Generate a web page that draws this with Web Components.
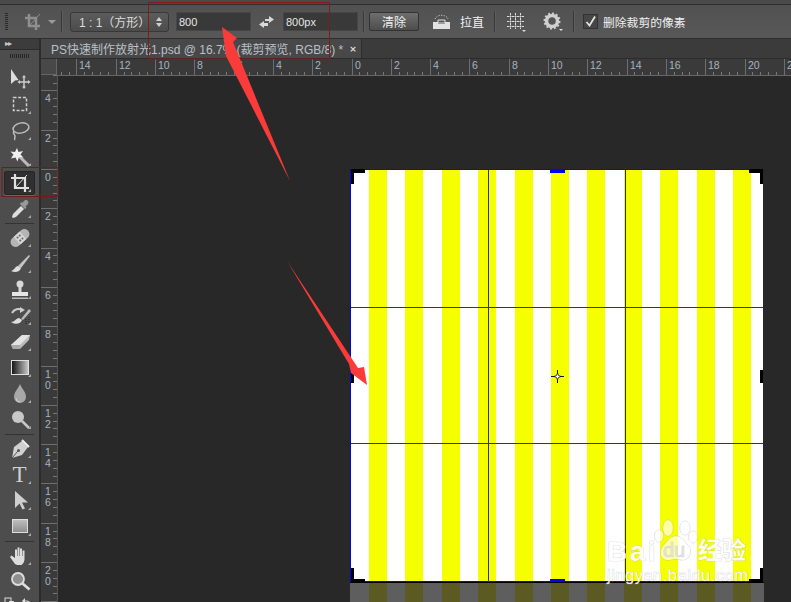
<!DOCTYPE html>
<html lang="zh"><head><meta charset="utf-8"><title>Photoshop</title>
<style>html,body{margin:0;padding:0;background:#282828;overflow:hidden}</style></head>
<body>
<ps-app></ps-app>
<script>
const FONT='"Liberation Sans","Noto Sans CJK SC",sans-serif';
function comp(name,html,setup){customElements.define(name,class extends HTMLElement{connectedCallback(){if(this.shadowRoot)return;const r=this.attachShadow({mode:'open'});r.innerHTML=html(this);if(setup)setup(r,this);}});}
const ICONS={
move:'<path d="M3 2v15l4-3.500 3.500-.5z" fill="#ddd"/><path d="M16 10v10M11 15h10" stroke="#ccc" stroke-width="1.500"/><path d="M16 8l2 2.500h-4zM16 22l2-2.500h-4zM9.500 15l2.500-2v4zM22.500 15l-2.500-2v4z" fill="#ccc"/>',
marquee:'<rect x="5.500" y="4.500" width="13" height="13" fill="none" stroke="#d0d0d0" stroke-width="1.500" stroke-dasharray="3 1.700"/>',
lasso:'<ellipse cx="13" cy="9" rx="8" ry="5" transform="rotate(-12 13 9)" fill="none" stroke="#bdbdbd" stroke-width="1.500"/><path d="M6 12c-2 3 1 3 1 5 0 2-1 3 0 4" fill="none" stroke="#bdbdbd" stroke-width="1.500"/>',
wand:'<path d="M11 11l10 10" stroke="#bbb" stroke-width="3"/><path d="M9 3l1.500 4 4.500-1-2.500 3.500 3 3-4.500-.5-1.500 4.500-2-4-4.500 1 2.500-4-3-3 4.500.5z" fill="#f0f0f0"/>',
crop:'<path d="M7 3v14h14M3 7h14v14" fill="none" stroke="#e0e0e0" stroke-width="2.200"/><path d="M7 17L19 4" stroke="#e0e0e0" stroke-width="1"/>',
eyedropper:'<path d="M5 21l-1-1 1-3 8-8 3 3-8 8z" fill="#ddd"/><path d="M12 7l5 5 1.500-1.500-1-1 2.500-2.500c1.500-3-1.500-5-3.500-3.500l-2.500 2.500-1-1z" fill="#999"/>',
heal:'<g transform="rotate(-42 12 12)"><rect x="1" y="7" width="22" height="10" rx="5" fill="#b5b5b5"/><rect x="8" y="7" width="8" height="10" fill="#d5d5d5"/><g fill="#666"><circle cx="10.500" cy="10" r="1"/><circle cx="13.500" cy="10" r="1"/><circle cx="10.500" cy="14" r="1"/><circle cx="13.500" cy="14" r="1"/></g></g>',
brush:'<path d="M10 14L21 3l1 1-9 12z" fill="#c5c5c5"/><path d="M10 14c-3 0-3 4-7 5 4 2 9 1 10-3z" fill="#ddd"/>',
stamp:'<circle cx="12" cy="6" r="3.500" fill="#d8d8d8"/><rect x="10.500" y="8" width="3" height="6" fill="#d8d8d8"/><path d="M4 14h16v4H4z" fill="#e5e5e5"/><rect x="4" y="19.500" width="16" height="1.500" fill="#bbb"/>',
history:'<path d="M4 9c2-4 7-5 10-3" fill="none" stroke="#ccc" stroke-width="2"/><path d="M12 3l5 3-5 3z" fill="#ccc"/><path d="M21 5l-8 10 2 1 8-9z" fill="#bbb"/><path d="M11 14c-3 0-4 4-8 4 4 3 10 2 11-2z" fill="#ddd"/><path d="M18 15v6M21 13v6" stroke="#222" stroke-width="1" stroke-dasharray="1 1"/>',
eraser:'<path d="M3 15L14 5h8l-1 5-9 9H5z" fill="#bbb"/><path d="M3 15l9 0 10-10-8 0z" fill="#e2e2e2"/><path d="M3 15h9v4H5z" fill="#aaa"/>',
gradient:'<defs><linearGradient id="g1"><stop offset="0" stop-color="#111"/><stop offset="1" stop-color="#ccc"/></linearGradient></defs><rect x="3.500" y="4.500" width="17" height="14" fill="url(#g1)" stroke="#e0e0e0"/>',
drop:'<path d="M12 2c2 5 6 8 6 13a6 6 0 0 1-12 0c0-5 4-8 6-13z" fill="#a8a8a8"/><path d="M8 16a4 4 0 0 0 4 4" stroke="#ccc" fill="none"/>',
dodge:'<circle cx="10" cy="9" r="6" fill="#c8c8c8"/><path d="M14 13l7 7" stroke="#c8c8c8" stroke-width="2.500"/>',
pen:'<path d="M4 21l2-11 8-6 6 6-6 8z" fill="#d0d0d0"/><path d="M4 21l6-7" stroke="#555"/><circle cx="10.500" cy="13.500" r="1.500" fill="#555"/><path d="M14 3l7 7" stroke="#eee" stroke-width="2"/>',
pathsel:'<path d="M7 2v17l4.500-4.500 3 6 2.500-1-3-6H20z" fill="#cfcfcf"/>',
rect:'<defs><linearGradient id="g2" x2="0" y2="1"><stop offset="0" stop-color="#c0c0c0"/><stop offset="1" stop-color="#8c8c8c"/></linearGradient></defs><rect x="4.500" y="4.500" width="15" height="13" fill="url(#g2)" stroke="#ddd"/>',
hand:'<path d="M7 20L2 13l1.500-1.500L7 14V5.500h2V12h.5V3.500h2V12h.5V4.500h2V12h.5V6.500h2V15c0 3-1.500 5-3 6H9z" fill="#dcdcdc"/>',
zoom:'<circle cx="10" cy="9" r="6" fill="#8f8f8f" stroke="#ddd" stroke-width="1.800"/><path d="M14.500 13.500l7 6" stroke="#ddd" stroke-width="2.800"/>'
};
comp('ps-icon',h=>`<style>:host{display:inline-flex;flex:none;width:${h.getAttribute('size')||24}px;height:${h.getAttribute('size')||24}px}svg{width:100%;height:100%;display:block}</style><svg viewBox="0 0 24 24">${ICONS[h.getAttribute('name')]||''}</svg>`);

comp('ps-tool',h=>`<style>
:host{display:flex;align-items:center;justify-content:center;position:relative;height:26px;width:39px;box-sizing:border-box;flex:none}
:host([active]) .b{background:#2f2f2f;border:1px solid #262626;box-shadow:0 1px 0 #666}
.b{width:31px;height:24px;box-sizing:border-box;display:flex;align-items:center;justify-content:center;position:relative;border:1px solid transparent;border-radius:2px;font:23px "Liberation Serif",serif;color:#d0d0d0}
.c{position:absolute;right:3px;bottom:2px;width:0;height:0;border-left:3px solid transparent;border-bottom:3px solid #aaa}
</style><div class="b"><slot></slot>${h.hasAttribute('corner')?'<i class="c"></i>':''}</div>`);

comp('ps-toolbox',()=>`<style>
:host{display:flex;flex-direction:column;width:39px;height:100%;background:#4d4d4d;border-right:2px solid #2c2c2c;overflow:hidden;font-size:0}
.head{height:10px;background:#3c3c3c;border-bottom:1px solid #2c2c2c;color:#ccc;font:8px "DejaVu Sans",sans-serif;letter-spacing:-1px;padding-left:5px;line-height:10px;flex:none}
.grip{height:4px;margin:4px 10px 8px;flex:none;background:repeating-linear-gradient(90deg,#262626 0 1px,transparent 1px 2px)}
</style><div class="head">▸▸</div><div class="grip"></div><slot></slot>`);

comp('ps-sep',()=>`<style>:host{display:block;height:1px;background:#333;margin:1px 5px;flex:none}</style>`);
comp('ps-swatches',()=>`<style>:host{display:block;height:10px;flex:none;margin-top:2px}svg{display:block}</style><svg width="39" height="10"><rect x="5" y="1" width="6" height="9" fill="none" stroke="#ddd"/><rect x="9" y="4" width="5" height="6" fill="#ddd"/><path d="M23 4h4a3 3 0 0 1 3 3v3" fill="none" stroke="#ddd"/><path d="M25 1v6l-3-3z" fill="#ddd"/></svg>`);
comp('ps-vdiv',()=>`<style>:host{display:block;flex:none;width:1px;height:21px;background:#383838;box-shadow:1px 0 0 #5e5e5e}</style>`);
comp('ps-field',()=>`<style>:host{display:flex;align-items:center;box-sizing:border-box;height:19px;background:#393939;border:1px solid #464646;color:#e6e6e6;font:11px ${FONT};padding-left:2px;flex:none}</style><slot></slot>`);
comp('ps-select',()=>`<style>:host{display:flex;align-items:center;box-sizing:border-box;width:99px;height:20px;border:1px solid #383838;border-radius:3px;background:linear-gradient(#5c5c5c,#4c4c4c);color:#dcdcdc;font:12px ${FONT};padding-left:8px;flex:none;position:relative;white-space:pre}
svg{position:absolute;right:5px;top:4px}</style><slot></slot><svg width="8" height="10"><path d="M4 0l3 4H1zM4 10l3-4H1z" fill="#d0d0d0"/></svg>`);
comp('ps-button',()=>`<style>:host{display:flex;align-items:center;justify-content:center;box-sizing:border-box;width:50px;height:19px;border:1px solid #333;border-radius:2px;background:linear-gradient(#6e6e6e,#4d4d4d);color:#f0f0f0;font:12px ${FONT};flex:none}</style><slot></slot>`);
comp('ps-check',()=>`<style>:host{display:flex;align-items:center;color:#f0f0f0;font:11.800px ${FONT};flex:none}
i{display:flex;align-items:center;justify-content:center;box-sizing:border-box;width:15px;height:15px;background:#464646;border:1px solid #333;margin-right:5px}</style>
<i><svg width="13" height="13"><path d="M2.500 7l3 3.500L11 1.500" fill="none" stroke="#e6e6e6" stroke-width="1.700"/></svg></i><slot></slot>`);

comp('ps-optionbar',()=>`<style>
:host{display:flex;align-items:center;box-sizing:border-box;height:39px;background:linear-gradient(#4a4a4a 0 4px,#2e2e2e 4px 5px,#515151 5px,#585858 38px,#2e2e2e 38px);padding:5px 0 1px 0;grid-column:1/3}
.grip{width:3px;height:18px;margin:0 16px 0 5px;background:repeating-linear-gradient(#2a2a2a 0 1px,transparent 1px 2px);flex:none}
.tri{width:0;height:0;border:4px solid transparent;border-top:4px solid #9a9a9a;border-bottom:0;margin:0 5px 0 7px}
.s{flex:none;color:#f2f2f2;font:12px ${FONT}}
svg{flex:none;display:block}
</style>
<div class="grip"></div>
<svg width="17" height="18" viewBox="0 0 17 18"><path d="M5 1v12h11M1 5h11v12" fill="none" stroke="#8f8f8f" stroke-width="2.500"/><path d="M5 13L16 1" stroke="#8f8f8f"/></svg>
<div class="tri"></div><ps-vdiv style="margin-right:8px"></ps-vdiv>
<ps-select>1 : 1（方形）</ps-select>
<ps-field style="width:75px;margin-left:7px">800</ps-field>
<svg width="15" height="14" viewBox="0 0 15 14" style="margin:0 9px 0 8px"><path d="M6 4h4V1l5 3.500L10 8V6H6zM9 8H5V6L0 9.500 5 13v-2h4z" fill="#d8d8d8"/></svg>
<ps-field style="width:75px">800px</ps-field>
<ps-vdiv style="margin:0 5px"></ps-vdiv>
<ps-button>清除</ps-button>
<svg width="19" height="16" viewBox="0 0 19 16" style="margin:0 9px 0 13px"><path d="M1 8h5v2h7V8h5v7H1z" fill="#e2e2e2"/><path d="M6 6h7v3H6z" fill="none" stroke="#e2e2e2"/><path d="M3 5c2-5 11-5 13 0" fill="none" stroke="#ddd" stroke-dasharray="1 1.500"/></svg>
<span class="s">拉直</span>
<ps-vdiv style="margin:0 11px 0 10px"></ps-vdiv>
<svg width="20" height="20" viewBox="0 0 20 20"><path d="M4.500 1v16M9.500 1v16M14.500 1v16M1 4.500h17M1 9.500h17M1 14.500h17" stroke="#ddd" stroke-dasharray="2 .5"/><path d="M16 18h4l-2 2z" fill="#ddd"/></svg>
<svg width="20" height="20" viewBox="0 0 20 20" style="margin:0 10px 0 17px"><circle cx="9" cy="9" r="5.500" fill="none" stroke="#cfcfcf" stroke-width="3.500"/><circle cx="9" cy="9" r="7.500" fill="none" stroke="#cfcfcf" stroke-width="2" stroke-dasharray="2 1.900"/><path d="M16 17h4l-2 2z" fill="#ddd"/></svg>
<ps-vdiv style="margin-right:9px"></ps-vdiv>
<ps-check>删除裁剪的像素</ps-check>`);

comp('ps-tabbar',()=>`<style>:host{display:flex;height:20px;background:#3b3b3b;box-sizing:border-box;border-bottom:1px solid #2c2c2c}
.tab{display:flex;align-items:center;width:321px;box-sizing:border-box;padding-left:10px;background:#484848;border-right:1px solid #2c2c2c;color:#b9c0c8;font:12px ${FONT};white-space:pre}
.x{margin-left:6px;font:bold 9px "DejaVu Sans",sans-serif;color:#ddd}</style>
<div class="tab"><slot></slot><span class="x">×</span></div>`);

function rulerSvg(dir,len,origin){
 let ticks='',labels='';const st=39.3;
 const from=Math.ceil(-origin/st)-1,to=Math.ceil((len-origin)/st)+1;
 for(let i=from;i<=to;i++){
  const p=origin+i*st;
  if(dir==='h'){
   ticks+=`<path d="M${Math.round(p)+.5} 0v16" stroke="#6e6e6e"/>`;
   for(let k=1;k<5;k++){const t=p+k*st/5;ticks+=`<path d="M${Math.round(t)+.5} 13v3" stroke="#777"/>`;}
   if(p>=0&&p+3<len){
     const lab=String(Math.abs(i*2));
     /* the window's edge leaves only the first digit of the last label in sight */
     const shown=(p+3+13>len)?lab[0]:lab;
     labels+=`<span style="left:${Math.round(p)+3}px;top:1px">${shown}</span>`;
   }
  }else{
   ticks+=`<path d="M0 ${Math.round(p)+.5}h16" stroke="#6e6e6e"/>`;
   for(let k=1;k<5;k++){const t=p+k*st/5;ticks+=`<path d="M12 ${Math.round(t)+.5}h4" stroke="#777"/>`;}
   if(p>=0&&p+26<len){
     const digits=String(Math.abs(i*2)).split('').join('<br>');
     labels+=`<span style="left:4px;top:${Math.round(p)+3}px">${digits}</span>`;
   }
  }
 }
 return `<svg width="${dir==='h'?len:16}" height="${dir==='h'?16:len}">${ticks}</svg>${labels}`;
}
comp('ps-ruler',h=>{const d=h.getAttribute('dir');const len=+h.getAttribute('len');const o=+h.getAttribute('origin');
 return `<style>:host{display:block;position:relative;overflow:hidden;background:#3a3a3a;box-sizing:border-box;${d==='h'?'height:16px':'width:16px;height:100%'}}
 svg{display:block;position:absolute;left:0;top:0}
 span{position:absolute;font:10.500px/11px "Liberation Sans",sans-serif;color:#a6b3c0}</style>${rulerSvg(d,len,o)}`});
comp('ps-corner',()=>`<style>:host{display:block;width:16px;height:16px;background:#484848;box-shadow:inset -1px -1px 0 #666;flex:none}</style>`);

comp('ps-document',()=>`<style>
:host{display:block;position:absolute;left:351px;top:170px;width:412px;height:432px}
.img{position:absolute;left:0;top:0;width:412px;height:412px;background:#fff;
 background-image:repeating-linear-gradient(90deg,#fff 0 18px,#f6ff00 18px 36px,#fff 36px 36.400px)}
.under{position:absolute;left:0;top:413px;width:412px;height:19px;background-color:#5e5e5e;box-shadow:-1px 0 #5e5e5e,1px 0 #5e5e5e;background-image:repeating-linear-gradient(90deg,#5e5e5e 0 18px,#5b5a23 18px 36px,#5e5e5e 36px 36.400px)}
.edge{position:absolute;background:#0000ff}
.bk{position:absolute;background:#000}
.g{position:absolute}
</style>
<div class="under"></div>
<div class="img"></div>
<div class="edge" style="left:-1px;top:-1px;width:1px;height:414px"></div>
<div class="edge" style="left:-1px;top:-1px;width:413px;height:1px"></div>
<div class="bk" style="left:-1px;top:412px;width:414px;height:1px"></div>
<div class="edge" style="left:-1px;top:411px;width:413px;height:1px"></div>
<div class="g" style="left:137px;top:0;width:1px;height:412px;background:#2a2ad0"></div>
<div class="g" style="left:274px;top:0;width:1px;height:412px;background:#23238c"></div>
<div class="g" style="left:0;top:137px;width:412px;height:1px;background:#2d2d90"></div>
<div class="g" style="left:0;top:273px;width:412px;height:1px;background:#2d2d90"></div>
<div class="bk" style="left:0;top:-1px;width:14px;height:4px"></div><div class="bk" style="left:0;top:0;width:3px;height:14px"></div>
<div class="bk" style="right:0;top:-1px;width:14px;height:4px"></div><div class="bk" style="right:0;top:0;width:3px;height:14px"></div>
<div class="bk" style="left:0;top:398px;width:3px;height:14px"></div><div class="bk" style="left:0;top:409px;width:14px;height:3px"></div>
<div class="bk" style="right:0;top:398px;width:3px;height:14px"></div><div class="bk" style="right:0;top:409px;width:14px;height:3px"></div>
<div class="edge" style="left:199px;top:0;width:15px;height:3px"></div>
<div class="edge" style="left:199px;top:409px;width:15px;height:3px"></div>
<div class="bk" style="left:0;top:200px;width:3px;height:13px"></div>
<div class="bk" style="right:0;top:200px;width:3px;height:13px"></div>
<svg style="position:absolute;left:200px;top:200px" width="13" height="13" viewBox="0 0 13 13"><path d="M6.500 0v13M0 6.500h13" stroke="#111"/><path d="M6.500 3l1 2.500L10 6.500 7.500 7.500l-1 2.500-1-2.500L3 6.500l2.500-1z" fill="#fff" stroke="#111" stroke-width=".8"/></svg>`);

comp('ps-watermark',()=>`<style>
:host{display:block;position:absolute;left:605px;top:515px;width:150px;height:70px;color:rgba(255,255,255,.88);-webkit-text-stroke:.7px rgba(175,175,175,.6);paint-order:stroke fill;font-family:"Liberation Sans",sans-serif}
.t{position:absolute;white-space:pre;line-height:1}
</style>
<svg style="position:absolute;left:49px;top:2px" width="46" height="50" viewBox="0 0 46 50"><g fill="rgba(255,255,255,.65)" stroke="rgba(150,150,150,.45)" stroke-width=".8"><ellipse cx="14" cy="11" rx="5" ry="8"/><ellipse cx="31" cy="11" rx="5" ry="7"/><ellipse cx="39" cy="20" rx="4.500" ry="6"/><ellipse cx="5" cy="19" rx="4.500" ry="6"/><path d="M22 19c6 0 8 5 12 9 5 5 2 15-5 15-4 0-5-1-8-1-4 0-5 2-9 1-6-1-7-9-3-14 4-4 7-10 13-10z"/></g></svg>
<span class="t" style="left:2px;top:23px;font-size:28px;letter-spacing:2.500px;font-weight:700">Bai</span>
<span class="t" style="left:58px;top:25px;font-size:20px;color:rgba(225,225,225,.9)">du</span>
<span class="t" style="left:93px;top:22px;font:600 24px/1 'Noto Sans CJK SC',sans-serif">经验</span>
<span class="t" style="left:2px;top:52px;font-size:16.500px;letter-spacing:.5px">jingyan.baidu.com</span>`);

comp('ps-arrows',()=>`<style>:host{display:block;position:absolute;inset:0;pointer-events:none}svg{display:block}</style>
<svg width="791" height="602" viewBox="0 0 791 602" fill="#fb3a3a">
<rect x="148.500" y="2.500" width="181" height="56.500" fill="none" stroke="#7e1c1c"/>
<rect x="2" y="167.500" width="56" height="29" fill="none" stroke="#701c1c"/>
<path d="M222 27L237 38L233 42L290 181L226 56Z"/>
<path d="M287 261L358 368L364 367L367 385L351 373L349 364Z"/>
</svg>`);

comp('ps-app',()=>`<style>
:host{display:grid;position:relative;width:791px;height:602px;overflow:hidden;grid-template-columns:41px 1fr;grid-template-rows:39px 1fr;background:#282828}
.right{display:grid;grid-template-rows:20px 16px 1fr;min-width:0;min-height:0}
.top{display:flex}
.body{display:grid;grid-template-columns:16px 1fr;min-height:0}
.canvas{background:#282828;border-top:1px solid #666;border-left:1px solid #555}
</style>
<ps-optionbar></ps-optionbar>
<ps-toolbox>
 <ps-tool><ps-icon name="move"></ps-icon></ps-tool>
 <ps-tool corner><ps-icon name="marquee"></ps-icon></ps-tool>
 <ps-tool corner><ps-icon name="lasso"></ps-icon></ps-tool>
 <ps-tool corner><ps-icon name="wand"></ps-icon></ps-tool>
 <ps-tool corner active><ps-icon name="crop"></ps-icon></ps-tool>
 <ps-tool corner><ps-icon name="eyedropper"></ps-icon></ps-tool>
 <ps-sep></ps-sep>
 <ps-tool corner><ps-icon name="heal"></ps-icon></ps-tool>
 <ps-tool corner><ps-icon name="brush"></ps-icon></ps-tool>
 <ps-tool corner><ps-icon name="stamp"></ps-icon></ps-tool>
 <ps-tool corner><ps-icon name="history"></ps-icon></ps-tool>
 <ps-tool corner><ps-icon name="eraser"></ps-icon></ps-tool>
 <ps-tool corner><ps-icon name="gradient"></ps-icon></ps-tool>
 <ps-tool corner><ps-icon name="drop"></ps-icon></ps-tool>
 <ps-tool corner><ps-icon name="dodge"></ps-icon></ps-tool>
 <ps-sep></ps-sep>
 <ps-tool corner><ps-icon name="pen"></ps-icon></ps-tool>
 <ps-tool corner>T</ps-tool>
 <ps-tool corner><ps-icon name="pathsel"></ps-icon></ps-tool>
 <ps-tool corner><ps-icon name="rect"></ps-icon></ps-tool>
 <ps-sep></ps-sep>
 <ps-tool corner><ps-icon name="hand"></ps-icon></ps-tool>
 <ps-tool><ps-icon name="zoom"></ps-icon></ps-tool>
 <ps-swatches></ps-swatches>
</ps-toolbox>
<div class="right">
 <ps-tabbar>PS快速制作放射光1.psd @ 16.7% (裁剪预览, RGB/8) *</ps-tabbar>
 <div class="top"><ps-corner></ps-corner><ps-ruler dir="h" len="734" origin="294.500" style="flex:1"></ps-ruler></div>
 <div class="body"><ps-ruler dir="v" len="527" origin="94"></ps-ruler><div class="canvas"></div></div>
</div>
<ps-document></ps-document>
<ps-watermark></ps-watermark>
<ps-arrows></ps-arrows>`);
</script>
</body></html>
